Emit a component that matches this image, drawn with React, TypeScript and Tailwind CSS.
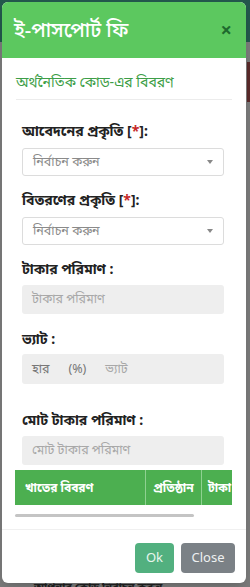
import React from 'react';

const bn = { fontFamily: '"Noto Sans", "Noto Sans Bengali", "Liberation Sans", sans-serif' };

function Label({ text, req }: { text: string; req?: boolean }) {
  return (
    <div className="h-[20px] leading-[20px] text-[14px] font-bold text-[#222]">
      {text}
      {req && (
        <span>
          {' '}[<span className="text-[#c62828]">*</span>]:
        </span>
      )}
    </div>
  );
}

function SelectBox() {
  return (
    <div className="h-[28px] mt-[7px] border border-[#dcdcdc] rounded-[3px] bg-white flex items-center pl-[10px] pr-[10px] justify-between">
      <span className="text-[12.5px] text-[#8a8a8a]">নির্বাচন করুন</span>
      <span className="w-0 h-0 border-l-[3px] border-r-[3px] border-t-[4px] border-l-transparent border-r-transparent border-t-[#888]" />
    </div>
  );
}

function Disabled({ text }: { text: string }) {
  return (
    <div className="h-[29px] mt-[6px] rounded-[3px] bg-[#eeeeee] flex items-center pl-[10px]">
      <span className="text-[12.5px] text-[#a8a8a8]">{text}</span>
    </div>
  );
}

export default function App() {
  return (
    <div className="relative w-[250px] h-[587px] overflow-hidden bg-[#7a7a7a]" style={bn}>
      {/* dimmed page behind */}
      <div className="h-[42px] bg-[#23574c]" />
      <div className="absolute right-0 top-[62px] w-[3px] h-[40px] bg-[#5a2a2a]" />
      <div className="absolute left-[34px] top-[580px] text-[11px] leading-[14px] font-bold text-[#222] whitespace-nowrap">আপনার কোড নির্বাচন করুন</div>

      {/* modal */}
      <div className="absolute left-[2px] top-[2px] w-[244px] h-[581px] bg-white rounded-[6px] overflow-hidden flex flex-col shadow-lg">
        <div className="h-[56px] shrink-0 bg-[#5cc85f] flex items-center justify-between pl-[12px] pr-[14px]">
          <span className="text-[20px] text-white font-medium">ই-পাসপোর্ট ফি</span>
          <span className="text-[20px] leading-none font-bold text-[#1e6a2e]">×</span>
        </div>

        <div className="px-[14px] pt-[14px]">
          <div className="h-[20px] leading-[20px] text-[14px] text-[#3d9e47]">অর্থনৈতিক কোড-এর বিবরণ</div>
          <div className="mt-[7px] border-t border-[#ececec]" />

          <div className="pl-[6px] pr-[8px] mt-[21px]">
            <Label text="আবেদনের প্রকৃতি" req />
            <SelectBox />
            <div className="mt-[14px]">
              <Label text="বিতরণের প্রকৃতি" req />
            </div>
            <SelectBox />
            <div className="mt-[14px]">
              <Label text="টাকার পরিমাণ :" />
            </div>
            <Disabled text="টাকার পরিমাণ" />
            <div className="mt-[15px]">
              <Label text="ভ্যাট :" />
            </div>
            <div className="h-[30px] mt-[5px] rounded-[3px] bg-[#eeeeee] flex items-center pl-[10px] text-[12.5px]">
              <span className="text-[#777]">হার</span>
              <span className="ml-[19px] text-[#777]">(%)</span>
              <span className="ml-[19px] text-[#a8a8a8]">ভ্যাট</span>
            </div>
            <div className="mt-[26px]">
              <Label text="মোট টাকার পরিমাণ :" />
            </div>
            <Disabled text="মোট টাকার পরিমাণ" />
          </div>

          <div className="mt-[5px] ml-[-1px] w-[217px] overflow-hidden">
            <div className="flex h-[35px] bg-[#4caf50] text-white text-[12px] font-bold w-[300px] whitespace-nowrap">
              <div className="w-[131px] flex items-center pl-[10px] border-r border-[#8fd191]">খাতের বিবরণ</div>
              <div className="w-[56px] flex items-center justify-center border-r border-[#8fd191]">প্রতিষ্ঠান</div>
              <div className="flex-1 flex items-center pl-[6px]">টাকা</div>
            </div>
          </div>
          <div className="mt-[9px] ml-[-1px] w-[179px] h-[3px] rounded-full bg-[#c4c4c4]" />
        </div>

        <div className="mt-[12px] border-t border-[#f0f0f0] flex justify-end gap-[7px] pr-[11px] pt-[13px]">
          <button className="w-[39px] h-[30px] rounded-[4px] bg-[#52b07f] text-[#e8f6ee] text-[13px]">Ok</button>
          <button className="w-[54px] h-[30px] rounded-[4px] bg-[#7b8186] text-[#eef0f1] text-[13px]">Close</button>
        </div>
      </div>
    </div>
  );
}
